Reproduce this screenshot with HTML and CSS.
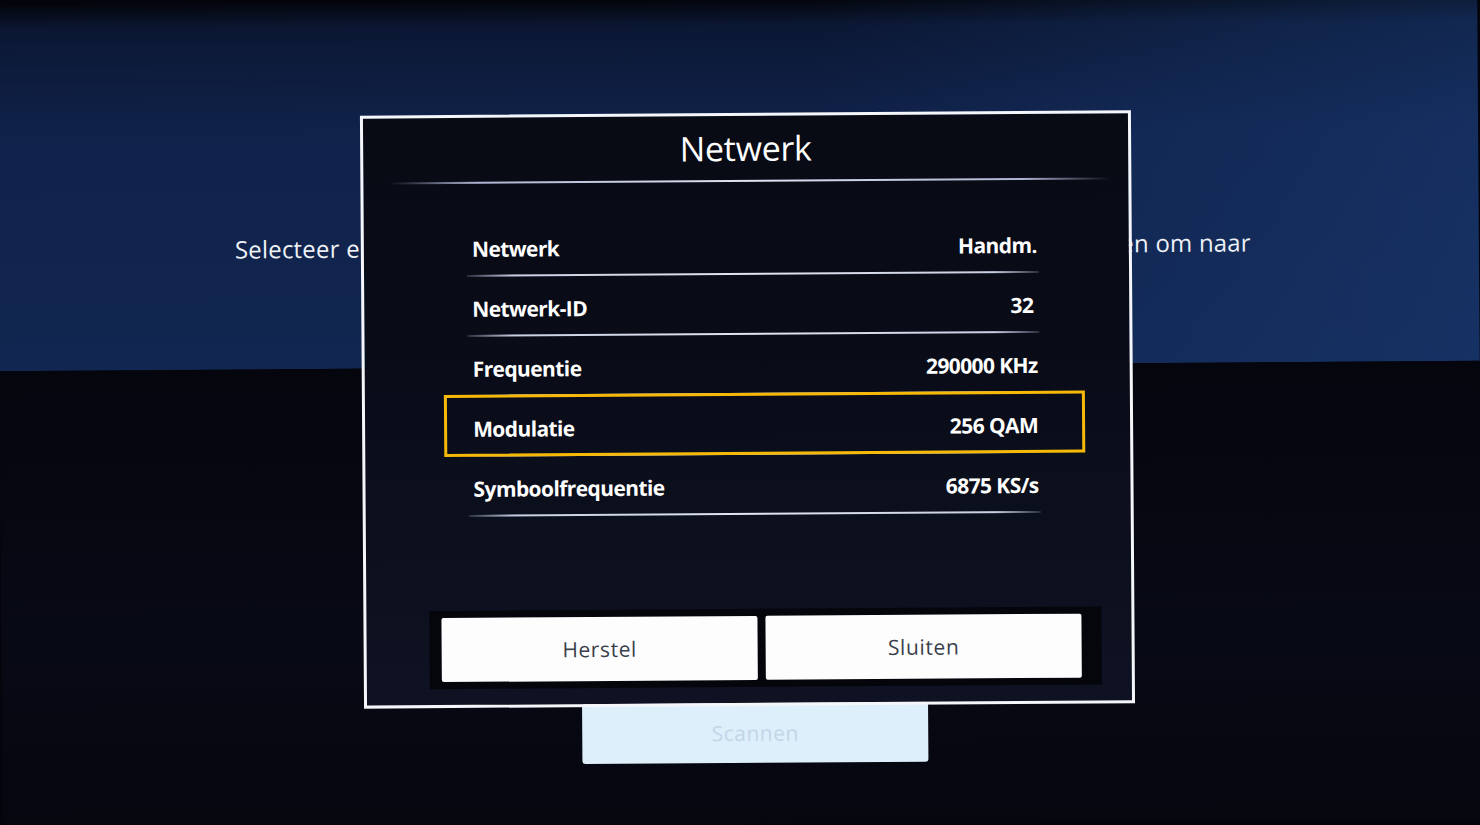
FILE: index.html
```html
<!DOCTYPE html>
<html lang="nl">
<head>
<meta charset="utf-8">
<title>Netwerk</title>
<link rel="stylesheet" href="styles.css">
</head>
<body>
<div class="screen">
  <section class="top-panel">
    <p class="intro"><span class="intro-left">Selecteer e</span><span class="intro-right">en om naar</span></p>
  </section>
  <section class="bottom-panel">
    <div class="scan-btn">Scannen</div>
  </section>

  <div class="dialog">
    <h1 class="dialog-title">Netwerk</h1>
    <div class="title-sep"></div>
    <ul class="rows">
      <li class="row"><span class="label">Netwerk</span><span class="value">Handm.</span></li>
      <li class="row"><span class="label">Netwerk-ID</span><span class="value v-id">32</span></li>
      <li class="row"><span class="label">Frequentie</span><span class="value">290000 KHz</span></li>
      <li class="row focused"><span class="label">Modulatie</span><span class="value">256 QAM</span></li>
      <li class="row"><span class="label">Symboolfrequentie</span><span class="value">6875 KS/s</span></li>
    </ul>
    <div class="spacer"></div>
    <div class="btn-bar">
      <div class="btn btn-left">Herstel</div>
      <div class="btn btn-right">Sluiten</div>
    </div>
  </div>
</div>
</body>
</html>
```

FILE: styles.css
```css
* { box-sizing: border-box; }
html, body { margin: 0; padding: 0; }
body {
  background: #04050c;
  font-family: "Open Sans", "Noto Sans", sans-serif;
  overflow: hidden;
}
.screen {
  position: relative;
  width: 1480px;
  height: 825px;
  display: flex;
  flex-direction: column;
  transform: rotate(-0.4deg);
}
.top-panel {
  height: 366px;
  flex: none;
  background:
    linear-gradient(90deg, rgba(20,50,110,0) 55%, rgba(30,70,135,0.35) 100%),
    linear-gradient(180deg, #04060d 0%, #0b1733 7%, #10224a 35%, #112650 100%);
  padding: 226px 228px 0 236px;
}
.intro {
  margin: 0;
  color: #eef1f6;
  font-size: 24px;
  line-height: 40px;
  display: flex;
  justify-content: space-between;
  align-items: flex-start;
}
.intro span { white-space: nowrap; letter-spacing: 0.2px; }
.bottom-panel {
  flex: 1;
  background: linear-gradient(180deg, #04050d 0%, #070915 60%, #05060e 100%);
  padding: 337px 0 0 580px;
}
.scan-btn {
  width: 346px;
  height: 60px;
  background: #ddeffb;
  border-radius: 3px;
  color: #c2d6e6;
  font-size: 21px;
  display: flex;
  align-items: center;
  justify-content: center;
  letter-spacing: 0.5px;
}

.dialog {
  position: absolute;
  left: 362px;
  top: 113px;
  width: 771px;
  height: 593px;
  border: 3px solid #f4f6fa;
  background: linear-gradient(180deg, #080a14 0%, #0a0d19 50%, #0e1222 100%);
  display: flex;
  flex-direction: column;
}
.dialog-title {
  margin: 0;
  padding-top: 12px;
  text-align: center;
  color: #ffffff;
  font-weight: 400;
  font-size: 34px;
  line-height: 40px;
  letter-spacing: -0.3px;
}
.title-sep {
  margin: 12px 18px 0 26px;
  height: 2px;
  background: linear-gradient(90deg, rgba(150,160,200,0) 0%, rgba(190,198,230,0.9) 12%, #dfe4f4 50%, rgba(190,198,230,0.9) 88%, rgba(150,160,200,0) 100%);
}
.rows {
  list-style: none;
  margin: 34px 0 0 103px;
  padding: 0;
  width: 572px;
}
.row {
  position: relative;
  height: 60px;
  display: flex;
  align-items: center;
  justify-content: space-between;
  padding: 2px 2px 0 5px;
  color: #ffffff;
  font-weight: 700;
  font-size: 21px;
  letter-spacing: -0.6px;
}
.row::before {
  content: "";
  position: absolute;
  left: 0;
  right: 0;
  bottom: 1px;
  height: 2px;
  background: linear-gradient(90deg, rgba(160,170,205,0.2) 0%, #c9cfe2 8%, #e2e6f2 50%, #c9cfe2 92%, rgba(160,170,205,0.2) 100%);
}
.v-id { margin-right: 4px; }
.focused::after {
  content: "";
  position: absolute;
  left: -24px;
  right: -45px;
  top: -3px;
  bottom: 1px;
  border: 3px solid #f7b907;
}
.spacer { flex: 1; }
.btn-bar {
  margin: 0 30px 16px 63px;
  height: 78px;
  background: #05060c;
  padding: 6px 20px 6px 12px;
  display: flex;
  gap: 8px;
  align-items: center;
}
.btn {
  flex: 1;
  height: 64px;
  background: #fdfdfe;
  border-radius: 2px;
  color: #3a3f4b;
  font-size: 21px;
  display: flex;
  align-items: center;
  justify-content: center;
  letter-spacing: 0.6px;
}
```
